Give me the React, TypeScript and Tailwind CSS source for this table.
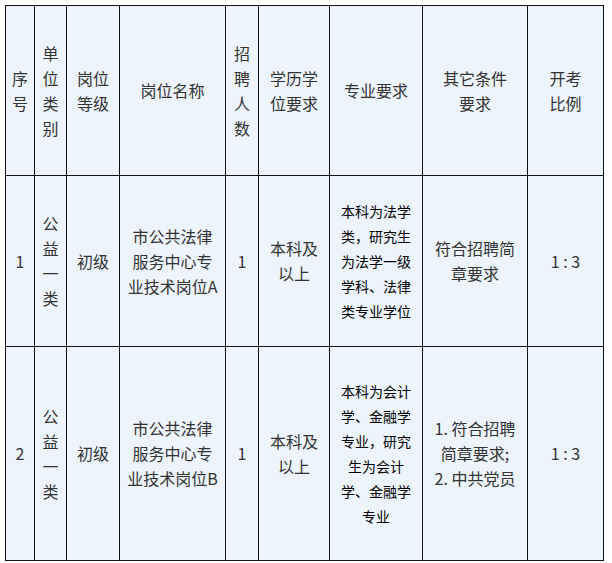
const header = [
    "序\n号",
    "单\n位\n类\n别",
    "岗位\n等级",
    "岗位名称",
    "招\n聘\n人\n数",
    "学历学\n位要求",
    "专业要求",
    "其它条件\n要求",
    "开考\n比例",
];

const rows = [
    {
        height: "h-[171px]",
        cells: [
            "1",
            "公\n益\n一\n类",
            "初级",
            "市公共法律\n服务中心专\n业技术岗位A",
            "1",
            "本科及\n以上",
            "本科为法学\n类，研究生\n为法学一级\n学科、法律\n类专业学位",
            "符合招聘简\n章要求",
            "1 : 3",
        ],
    },
    {
        height: "h-[214px]",
        cells: [
            "2",
            "公\n益\n一\n类",
            "初级",
            "市公共法律\n服务中心专\n业技术岗位B",
            "1",
            "本科及\n以上",
            "本科为会计\n学、金融学\n专业，研究\n生为会计\n学、金融学\n专业",
            "1. 符合招聘\n简章要求;\n2. 中共党员",
            "1 : 3",
        ],
    },
];

const widths = ["w-[29px]", "w-[32px]", "w-[53px]", "w-[106px]", "w-[33px]", "w-[71px]", "w-[93px]", "w-[105px]", "w-[76px]"];

function Cell({ text, major }: { text: string; major?: boolean }) {
    return (
        <td
            className={
                "border border-[#111] p-0 text-center align-middle whitespace-pre leading-[25px] " +
                (major ? "text-[14px] text-black" : "text-[16px] text-[#333]")
            }
        >
            {text}
        </td>
    );
}

export default function App() {
    return (
        <div className="w-[612px] h-[563px] bg-white pt-[5px] pl-[5px] font-['Noto_Sans_CJK_SC',sans-serif]">
            <table className="table-fixed border-collapse w-[598px] bg-[#eef4fb]">
                <colgroup>
                    {widths.map((w, i) => (
                        <col key={i} className={w} />
                    ))}
                </colgroup>
                <tbody>
                    <tr className="h-[170px]">
                        {header.map((h, i) => (
                            <Cell key={i} text={h} />
                        ))}
                    </tr>
                    {rows.map((row, r) => (
                        <tr key={r} className={row.height}>
                            {row.cells.map((c, i) => (
                                <Cell key={i} text={c} major={i === 6} />
                            ))}
                        </tr>
                    ))}
                </tbody>
            </table>
        </div>
    );
}
